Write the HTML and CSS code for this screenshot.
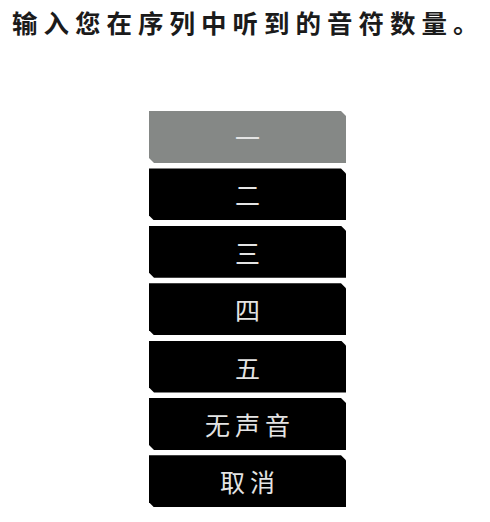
FILE: index.html
```html
<!DOCTYPE html>
<html lang="zh-CN">
<head>
  <meta charset="UTF-8" />
  <meta name="viewport" content="width=device-width, initial-scale=1.0" />
  <title>音符数量</title>
  <link rel="stylesheet" href="styles.css">
</head>
<body>
  <h1 class="prompt">输入您在序列中听到的音符数量。</h1>

  <div class="choices">
    <button class="choice selected">一</button>
    <button class="choice">二</button>
    <button class="choice">三</button>
    <button class="choice">四</button>
    <button class="choice">五</button>
    <button class="choice">无声音</button>
    <button class="choice">取消</button>
  </div>
</body>
</html>
```

FILE: styles.css
```css
body {
  margin: 0;
  background: #fff;
  font-family: "Noto Sans CJK SC", "Noto Sans", sans-serif;
}

.prompt {
  margin: 0;
  padding: 7px 0 0 12px;
  font-size: 25.5px;
  line-height: 30px;
  font-weight: 700;
  letter-spacing: 6px;
  color: #1b1b1b;
  white-space: nowrap;
}

.choices {
  display: flex;
  flex-direction: column;
  gap: 5.4px;
  width: 197px;
  margin: 74px 0 0 149px;
}

.choice {
  height: 52px;
  border: none;
  padding: 0 0 0 5px;
  background: #000;
  color: #e4e4e4;
  font-family: inherit;
  font-size: 25px;
  font-weight: 400;
  letter-spacing: 5px;
  cursor: pointer;
  clip-path: polygon(0 0, calc(100% - 5px) 0, 100% 5px, 100% 100%, 5px 100%, 0 calc(100% - 5px));
}

.choice.selected {
  background: #858886;
}
```
